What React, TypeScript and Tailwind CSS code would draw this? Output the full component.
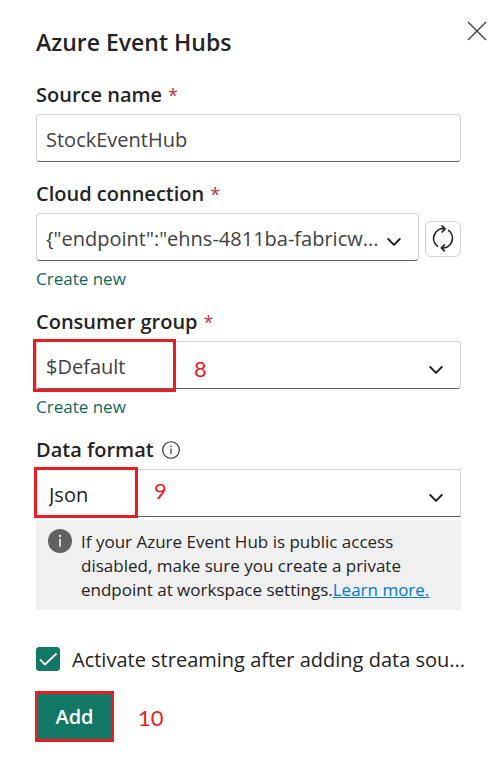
import { useState } from "react";
import type { ReactNode } from "react";

const control =
  "block h-12 w-full border border-[#d1d1d1] border-b-[#616161] bg-white text-xl";

function Label({ htmlFor, required, children }: { htmlFor: string; required?: boolean; children: ReactNode }) {
  return (
    <label htmlFor={htmlFor} className="block pt-px text-xl leading-7 font-semibold text-[#242424]">
      {children}
      {required && <span className="ml-1.5 text-lg leading-7 font-medium text-[#c4314b]">*</span>}
    </label>
  );
}

function Chevron() {
  return (
    <svg viewBox="0 0 14 8" className="pointer-events-none absolute top-[25px] right-[18px] h-2 w-3.5" fill="none" stroke="#1b1b1b" strokeWidth="1.8" strokeLinecap="round" strokeLinejoin="round" aria-hidden="true">
      <path d="M1.200 1l5.800 5.800L12.800 1" />
    </svg>
  );
}

function CreateNew() {
  return (
    <a href="#create" className="mt-1.5 block w-fit text-[17px] leading-6 text-[#0c695a]">
      Create new
    </a>
  );
}

export default function App() {
  const [name, setName] = useState("StockEventHub");
  const [active, setActive] = useState(true);

  return (
    <main className="min-h-screen bg-white pt-7 pr-[29px] pb-8 pl-9 font-['Open_Sans',sans-serif] text-[#242424]">
      <header className="relative">
        <h1 className="text-[23px] leading-7 font-semibold">Azure Event Hubs</h1>
        <button type="button" aria-label="Close" className="absolute -top-[7px] -right-6.5 p-0">
          <svg viewBox="0 0 20 20" className="size-5" fill="none" stroke="#424242" strokeWidth="1.4" aria-hidden="true">
            <path d="M1 1l18 18M19 1L1 19" />
          </svg>
        </button>
      </header>

      <form className="mt-6" onSubmit={(e) => e.preventDefault()}>
        <Label htmlFor="source" required>Source name</Label>
        <input
          id="source"
          value={name}
          onChange={(e) => setName(e.target.value)}
          className={`${control} mt-[5px] rounded-sm px-[9px] pt-0.5 text-[#424242]`}
        />

        <div className="mt-[17px]">
          <Label htmlFor="connection" required>Cloud connection</Label>
          <div className="mt-[5px] flex items-center gap-1.5">
            <div className="relative min-w-0 flex-1">
              <select id="connection" className={`${control} appearance-none rounded-sm pt-1 pr-9 pl-[9px] text-[#424242]`}>
                <option>{'{"endpoint":"ehns-4811ba-fabricw...'}</option>
              </select>
              <Chevron />
            </div>
            <button type="button" aria-label="Refresh" className="mt-1 flex size-9 items-center justify-center rounded-md border border-[#d1d1d1]">
              <svg viewBox="0 0 26 28" className="h-7 w-6.5" fill="none" stroke="#242424" strokeWidth="1.7" strokeLinecap="round" strokeLinejoin="round" aria-hidden="true">
                <path d="M7.400 21.200A9.800 9.800 0 0 1 15 3.800M12 1l3.200 2.800L12.200 7" />
                <path d="M18.600 5.400A9.800 9.800 0 0 1 11.400 22.900M14.400 19.900l-3 3 3 2.900" />
              </svg>
            </button>
          </div>
          <CreateNew />
        </div>

        <div className="mt-4">
          <Label htmlFor="group" required>Consumer group</Label>
          <div className="relative mt-[5px]">
            <select id="group" className={`${control} appearance-none rounded-sm pt-1 pr-9 pl-[9px] text-[#424242]`}>
              <option>$Default</option>
            </select>
            <Chevron />
            <div className="pointer-events-none absolute -top-0.5 -left-[3px] h-[53px] w-[143px] border-3 border-[#ed1c24]" />
            <span className="pointer-events-none absolute top-3.5 left-[158px] font-['Lato',sans-serif] text-[22px] leading-7 text-[#ed1c24]">8</span>
          </div>
          <CreateNew />
        </div>

        <div className="mt-4">
          <div className="flex items-center gap-2">
            <Label htmlFor="format">Data format</Label>
            <svg viewBox="0 0 18 18" className="size-[18px]" fill="none" stroke="#242424" strokeWidth="1.1" aria-hidden="true">
              <circle cx="9" cy="9" r="8.300" />
              <path d="M9 7.500v5.500" />
              <circle cx="9" cy="5.300" r=".8" fill="#242424" stroke="none" />
            </svg>
          </div>
          <div className="relative mt-[5px]">
            <select id="format" className={`${control} appearance-none pt-1 pr-9 pl-3 text-[#242424]`}>
              <option>Json</option>
            </select>
            <Chevron />
            <div className="pointer-events-none absolute -top-0.5 -left-0.5 h-[51px] w-[104px] border-3 border-[#ed1c24]" />
            <span className="pointer-events-none absolute top-2 left-[118px] font-['Lato',sans-serif] text-[22px] leading-7 text-[#ed1c24]">9</span>
          </div>
        </div>

        <div className="mt-[3px] flex gap-[9px] bg-[#f0f0f0] pt-[9px] pr-5 pb-2 pl-3">
          <svg viewBox="0 0 24 24" className="size-6 shrink-0" aria-hidden="true">
            <circle cx="12" cy="12" r="12" fill="#616161" />
            <circle cx="12" cy="7" r="1.200" fill="#e8e8e8" />
            <path d="M12 9.800v8" stroke="#e8e8e8" strokeWidth="1.800" />
          </svg>
          <p className="pt-px text-[17px] leading-6">
            If your Azure Event Hub is public access disabled, make sure you create a private endpoint at workspace settings.
            <a href="#learn" className="text-[#0078d4] underline">Learn more.</a>
          </p>
        </div>

        <div className="mt-9 -mr-2 flex items-center gap-3">
          <span className="relative -mt-0.5 size-6 shrink-0">
            <input
              id="activate"
              type="checkbox"
              checked={active}
              onChange={(e) => setActive(e.target.checked)}
              className="peer block size-6 appearance-none rounded-[3px] border border-[#616161] checked:border-[#117865] checked:bg-[#117865]"
            />
            <svg viewBox="0 0 24 24" className="pointer-events-none absolute inset-0 hidden size-6 peer-checked:block" fill="none" stroke="#fff" strokeWidth="1.800" aria-hidden="true">
              <path d="M4 12.500l5 5L20.500 6.500" />
            </svg>
          </span>
          <label htmlFor="activate" className="text-xl leading-7 whitespace-nowrap">
            Activate streaming after adding data sou...
          </label>
        </div>

        <div className="mt-[17px] -ml-px flex items-center gap-6">
          <button type="submit" className="h-[51px] w-[79px] border-3 border-[#ed1c24] bg-[#117865] text-xl font-semibold text-white">
            Add
          </button>
          <span className="pt-0.5 font-['Lato',sans-serif] text-[22px] leading-7 text-[#ed1c24]">10</span>
        </div>
      </form>
    </main>
  );
}
